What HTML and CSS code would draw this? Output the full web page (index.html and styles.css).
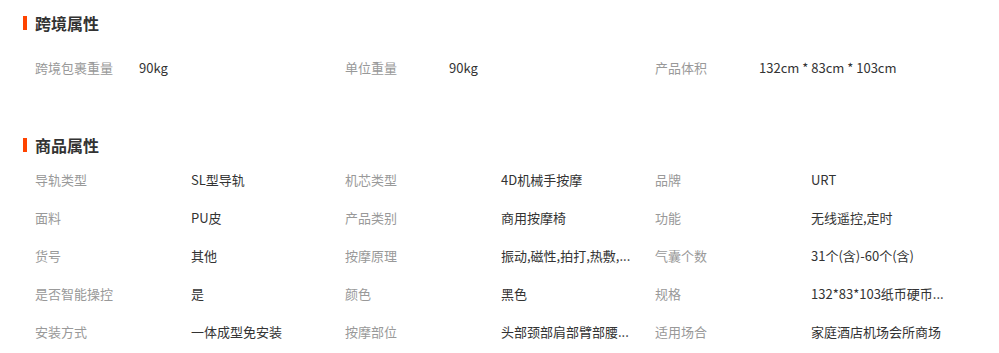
FILE: index.html
```html
<!DOCTYPE html>
<html lang="zh-CN">
<head>
<meta charset="utf-8">
<title>属性</title>
<link rel="stylesheet" href="styles.css">
</head>
<body>
<div class="page">
  <section class="group group--cross">
    <h3 class="group-title">跨境属性</h3>
    <ul class="attrs attrs--cross">
      <li class="attr"><span class="attr-name">跨境包裹重量</span><span class="attr-value">90kg</span></li>
      <li class="attr"><span class="attr-name">单位重量</span><span class="attr-value">90kg</span></li>
      <li class="attr"><span class="attr-name">产品体积</span><span class="attr-value">132cm * 83cm * 103cm</span></li>
    </ul>
  </section>
  <section class="group group--goods">
    <h3 class="group-title">商品属性</h3>
    <ul class="attrs attrs--goods">
      <li class="attr"><span class="attr-name">导轨类型</span><span class="attr-value">SL型导轨</span></li>
      <li class="attr"><span class="attr-name">机芯类型</span><span class="attr-value">4D机械手按摩</span></li>
      <li class="attr"><span class="attr-name">品牌</span><span class="attr-value">URT</span></li>
      <li class="attr"><span class="attr-name">面料</span><span class="attr-value">PU皮</span></li>
      <li class="attr"><span class="attr-name">产品类别</span><span class="attr-value">商用按摩椅</span></li>
      <li class="attr"><span class="attr-name">功能</span><span class="attr-value">无线遥控,定时</span></li>
      <li class="attr"><span class="attr-name">货号</span><span class="attr-value">其他</span></li>
      <li class="attr"><span class="attr-name">按摩原理</span><span class="attr-value">振动,磁性,拍打,热敷,...</span></li>
      <li class="attr"><span class="attr-name">气囊个数</span><span class="attr-value">31个(含)-60个(含)</span></li>
      <li class="attr"><span class="attr-name">是否智能操控</span><span class="attr-value">是</span></li>
      <li class="attr"><span class="attr-name">颜色</span><span class="attr-value">黑色</span></li>
      <li class="attr"><span class="attr-name">规格</span><span class="attr-value">132*83*103纸币硬币...</span></li>
      <li class="attr"><span class="attr-name">安装方式</span><span class="attr-value">一体成型免安装</span></li>
      <li class="attr"><span class="attr-name">按摩部位</span><span class="attr-value">头部颈部肩部臂部腰...</span></li>
      <li class="attr"><span class="attr-name">适用场合</span><span class="attr-value">家庭酒店机场会所商场</span></li>
    </ul>
  </section>
</div>
</body>
</html>
```
FILE: styles.css
```css
* { box-sizing: border-box; }
html, body { margin: 0; padding: 0; background: #fff; }
body {
  font-family: "Noto Sans CJK SC", "Noto Sans", sans-serif;
  font-size: 13px;
  color: #333;
}
.page { padding: 13px 0 0 23px; }
.group-title {
  display: flex;
  align-items: center;
  margin: 0;
  height: 20px;
  font-size: 16px;
  font-weight: bold;
  color: #333;
  line-height: 20px;
}
.group-title::before {
  content: "";
  display: block;
  width: 4px;
  height: 14px;
  margin-right: 8px;
  background: #ff4400;
}
.attrs {
  list-style: none;
  margin: 0;
  padding: 0 0 0 12px;
  display: grid;
  grid-template-columns: repeat(3, 310px);
}
.attrs--cross { margin-top: 16px; }
.group--goods { margin-top: 48px; }
.attrs--goods { margin-top: 6px; }
.attr {
  display: flex;
  height: 38px;
  line-height: 38px;
  white-space: nowrap;
}
.attr-name { color: #999; flex: none; }
.attrs--cross .attr-name { width: 104px; }
.attrs--goods .attr-name { width: 156px; }
.attr-value { color: #333; }
```
